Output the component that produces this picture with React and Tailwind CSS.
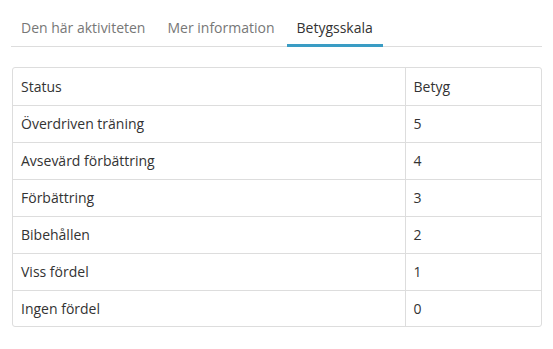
import React from "react";

const rows = [
  ["Överdriven träning", "5"],
  ["Avsevärd förbättring", "4"],
  ["Förbättring", "3"],
  ["Bibehållen", "2"],
  ["Viss fördel", "1"],
  ["Ingen fördel", "0"],
];

const tabs = ["Den här aktiviteten", "Mer information", "Betygsskala"];

function App() {
  return (
    <div
      className="w-[553px] h-[349px] bg-white text-[#333]"
      style={{ fontFamily: '"Open Sans", sans-serif' }}
    >
      {/* Tabs */}
      <div className="ml-[11px] mr-[11px] pt-[8px] flex border-b border-[#ddd]">
        {tabs.map((t, i) => (
          <div
            key={t}
            className={
              i === 2
                ? "mr-[2px] -mb-px px-[10px] pt-[10px] pb-[6px] text-[14px] leading-[20px] text-[#333] border-b-[3px] border-[#3a9cc4]"
                : "mr-[2px] -mb-px px-[10px] pt-[10px] pb-[6px] text-[14px] leading-[20px] text-[#777] border-b-[3px] border-transparent"
            }
          >
            {t}
          </div>
        ))}
      </div>

      {/* Grading scale table */}
      <div className="ml-[12px] mt-[20px] w-[530px] border border-[#ddd] rounded-[3px] overflow-hidden">
        <table className="w-full border-collapse text-[14px]">
          <thead>
            <tr className="h-[37px] border-b border-[#ddd]">
              <th className="pl-[8px] text-left font-normal">Status</th>
              <th className="w-[136px] pl-[8px] text-left font-normal border-l border-[#ddd]">
                Betyg
              </th>
            </tr>
          </thead>
          <tbody>
            {rows.map(([s, g], i) => (
              <tr
                key={s}
                className={
                  i < rows.length - 1
                    ? "h-[37px] border-b border-[#ddd]"
                    : "h-[36px]"
                }
              >
                <td className="pl-[8px]">{s}</td>
                <td className="pl-[8px] border-l border-[#ddd]">{g}</td>
              </tr>
            ))}
          </tbody>
        </table>
      </div>
    </div>
  );
}

export default App;
